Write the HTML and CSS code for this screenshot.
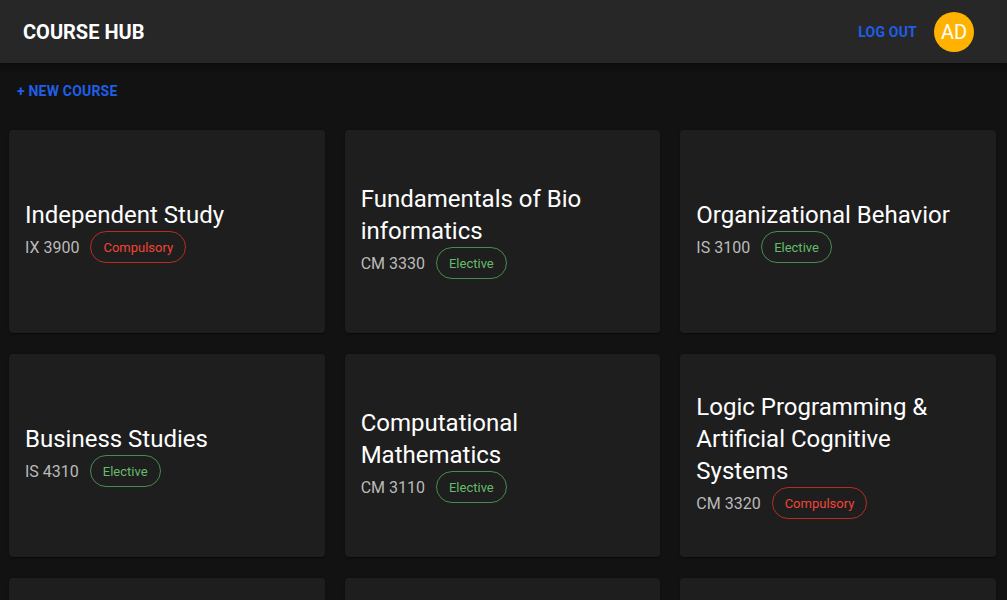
FILE: index.html
```html
<!DOCTYPE html>
<html lang="en">
<head>
<meta charset="utf-8">
<title>Course Hub</title>
<link rel="stylesheet" href="styles.css">
</head>
<body>
<header class="appbar">
  <div class="brand">COURSE HUB</div>
  <div class="actions">
    <button class="text-btn logout">LOG OUT</button>
    <div class="avatar">AD</div>
  </div>
</header>
<main class="main">
  <div class="toolbar-row">
    <button class="text-btn new-course">+ NEW COURSE</button>
  </div>
  <section class="grid">
    <article class="card">
      <div class="card-body">
        <h2 class="title">Independent Study</h2>
        <div class="meta"><span class="code">IX 3900</span><span class="chip compulsory">Compulsory</span></div>
      </div>
    </article>
    <article class="card">
      <div class="card-body">
        <h2 class="title">Fundamentals of Bio informatics</h2>
        <div class="meta"><span class="code">CM 3330</span><span class="chip elective">Elective</span></div>
      </div>
    </article>
    <article class="card">
      <div class="card-body">
        <h2 class="title">Organizational Behavior</h2>
        <div class="meta"><span class="code">IS 3100</span><span class="chip elective">Elective</span></div>
      </div>
    </article>
    <article class="card">
      <div class="card-body">
        <h2 class="title">Business Studies</h2>
        <div class="meta"><span class="code">IS 4310</span><span class="chip elective">Elective</span></div>
      </div>
    </article>
    <article class="card">
      <div class="card-body">
        <h2 class="title">Computational Mathematics</h2>
        <div class="meta"><span class="code">CM 3110</span><span class="chip elective">Elective</span></div>
      </div>
    </article>
    <article class="card">
      <div class="card-body">
        <h2 class="title">Logic Programming &amp; Artificial Cognitive Systems</h2>
        <div class="meta"><span class="code">CM 3320</span><span class="chip compulsory">Compulsory</span></div>
      </div>
    </article>
    <article class="card">
      <div class="card-body">
        <h2 class="title">Database Systems</h2>
        <div class="meta"><span class="code">IN 2100</span><span class="chip compulsory">Compulsory</span></div>
      </div>
    </article>
    <article class="card">
      <div class="card-body">
        <h2 class="title">Software Engineering</h2>
        <div class="meta"><span class="code">CS 2400</span><span class="chip compulsory">Compulsory</span></div>
      </div>
    </article>
    <article class="card">
      <div class="card-body">
        <h2 class="title">Data Mining</h2>
        <div class="meta"><span class="code">CM 3410</span><span class="chip elective">Elective</span></div>
      </div>
    </article>
  </section>
</main>
</body>
</html>
```

FILE: styles.css
```css
* { box-sizing: border-box; }

html, body {
  margin: 0;
  padding: 0;
  background: #121212;
  color: #ffffff;
  font-family: Roboto, "Liberation Sans", Arial, sans-serif;
}

body { overflow: hidden; }

.appbar {
  height: 63px;
  background: #272727;
  display: flex;
  align-items: center;
  justify-content: space-between;
  padding: 0 33px 0 23px;
  box-shadow: 0 2px 4px -1px rgba(0,0,0,0.2), 0 4px 5px 0 rgba(0,0,0,0.14), 0 1px 10px 0 rgba(0,0,0,0.12);
  position: relative;
  z-index: 1;
}

.brand {
  font-size: 20px;
  font-weight: 700;
  letter-spacing: 0;
  line-height: 1;
}

.actions {
  display: flex;
  align-items: center;
  gap: 17px;
}

.text-btn {
  background: none;
  border: none;
  padding: 0;
  font-family: inherit;
  font-weight: 700;
  color: #1e5ee8;
  cursor: pointer;
  text-transform: uppercase;
}

.logout {
  font-size: 14px;
  letter-spacing: 0.2px;
}

.avatar {
  width: 40px;
  height: 40px;
  border-radius: 50%;
  background: #ffb300;
  color: #ffffff;
  display: flex;
  align-items: center;
  justify-content: center;
  font-size: 20px;
}

.toolbar-row {
  padding: 19px 17px 0;
  height: 67px;
  display: flex;
  align-items: flex-start;
}

.new-course {
  font-size: 14px;
  letter-spacing: 0.2px;
  line-height: 18px;
  color: #1f5fe8;
}

.grid {
  display: grid;
  grid-template-columns: repeat(3, 1fr);
  column-gap: 20px;
  row-gap: 21px;
  padding: 0 11px 0 9px;
}

.card {
  height: 203px;
  background: #1e1e1e;
  border-radius: 4px;
  box-shadow: 0 2px 1px -1px rgba(0,0,0,0.2), 0 1px 1px 0 rgba(0,0,0,0.14), 0 1px 3px 0 rgba(0,0,0,0.12);
  display: flex;
  align-items: center;
  padding: 0 16px 1px;
}

.card-body {
  display: flex;
  flex-direction: column;
}

.title {
  margin: 0;
  font-size: 24px;
  font-weight: 400;
  line-height: 32px;
  color: #ffffff;
}

.meta {
  display: flex;
  align-items: center;
  gap: 11px;
  height: 32px;
}

.code {
  font-size: 16px;
  color: #bababa;
}

.chip {
  height: 32px;
  border-radius: 16px;
  padding: 0 12px;
  display: inline-flex;
  align-items: center;
  font-size: 13px;
  border: 1px solid;
}

.compulsory {
  color: #f44336;
  border-color: #b52c24;
}

.elective {
  color: #66bb6a;
  border-color: #4a8a4e;
}
```
